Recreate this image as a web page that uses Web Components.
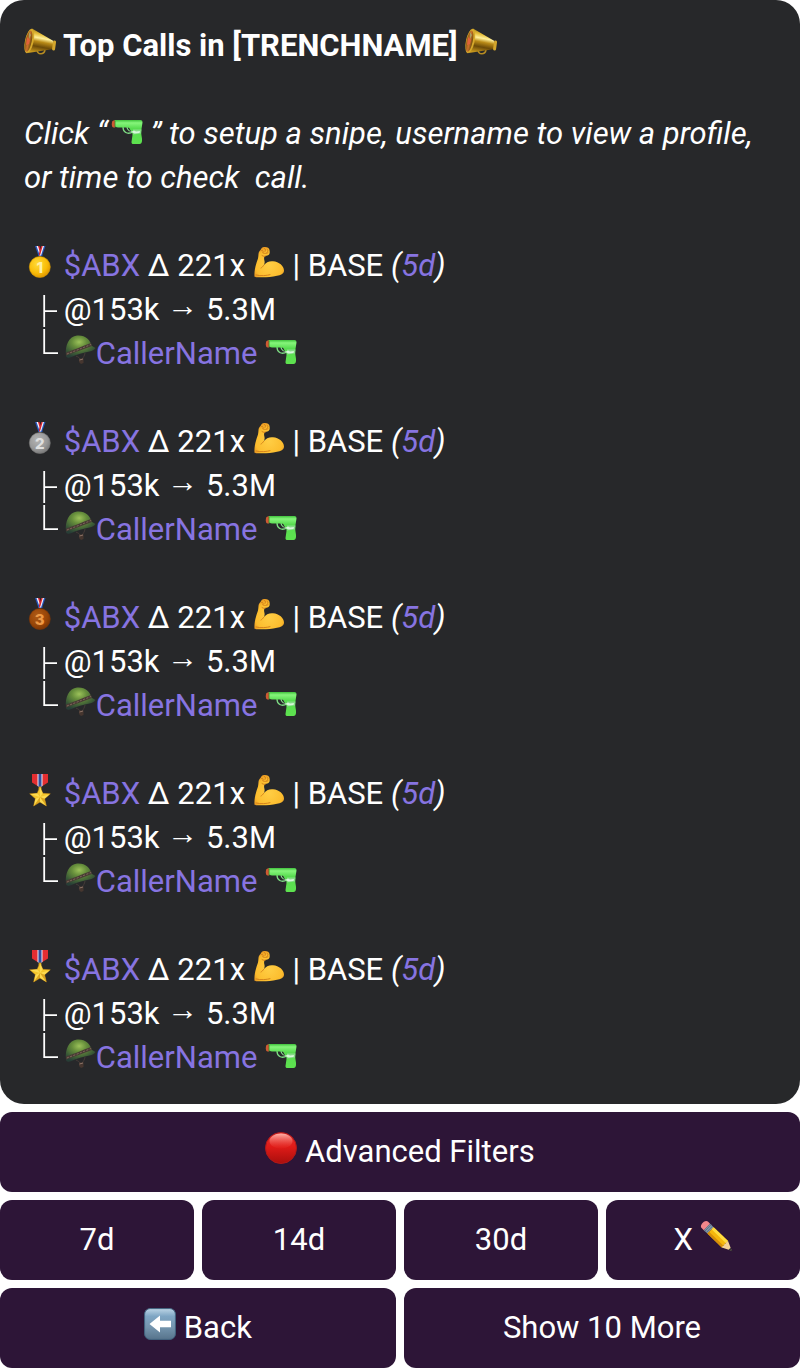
<!DOCTYPE html>
<html lang="en">
<head>
<meta charset="utf-8">
<meta name="viewport" content="width=device-width, initial-scale=1">
<title>Top Calls</title>
<style>
body { margin: 0; background: #fff; font: 31px/44px Roboto, sans-serif; color: #fff; }
</style>
</head>
<body>
<top-calls-page></top-calls-page>
<script>
const medal = (rim, light, mid, dark, ink, digit) => `
  <defs><radialGradient id="m" cx=".4" cy=".35" r=".75"><stop offset="0" stop-color="${light}"/><stop offset=".6" stop-color="${mid}"/><stop offset="1" stop-color="${dark}"/></radialGradient></defs>
  <path d="M11 0h3.500l4 10h-4z" fill="#2754b8"/><path d="M12.500 0h2l3.500 10h-2z" fill="#f4f4fa"/><path d="M14 0h1.500l2.500 8-1 2z" fill="#d8232c"/>
  <path d="M21.500 0H18l-3.500 10H18z" fill="#2754b8"/><path d="M20 0h-2l-3 9.500h2z" fill="#f4f4fa"/><path d="M18.700 0h-1.400l-2.500 8 1 2z" fill="#d8232c"/>
  <circle cx="15.800" cy="21" r="10.500" fill="url(#m)" stroke="${rim}" stroke-width=".6"/>
  <text x="15.800" y="26.500" text-anchor="middle" font-family="Inter, sans-serif" font-weight="800" font-size="15" fill="${ink}">${digit}</text>`;
const ICONS = {
  horn: `
  <defs><linearGradient id="b" x1=".6" y1="0" x2=".4" y2="1"><stop offset="0" stop-color="#8d6a12"/><stop offset=".25" stop-color="#e5bd38"/><stop offset=".4" stop-color="#fff09a"/><stop offset=".55" stop-color="#b98a16"/><stop offset=".75" stop-color="#6b4a08"/><stop offset="1" stop-color="#c8981d"/></linearGradient>
  <linearGradient id="c"><stop offset="0" stop-color="#8c5a12"/><stop offset=".5" stop-color="#c9702a"/><stop offset="1" stop-color="#6d4b0c"/></linearGradient></defs>
  <g transform="translate(0 2)"><path d="M13 22c.5 5 7 5 8 0" fill="none" stroke="#b68c22" stroke-width="1.500"/>
  <path d="M8 .5 29.500 13v8L4 25z" fill="url(#b)"/>
  <ellipse cx="5.300" cy="13" rx="4.300" ry="12.500" transform="rotate(12 5.300 13)" fill="#d6a92b"/>
  <ellipse cx="4.600" cy="13.200" rx="3.100" ry="10.800" transform="rotate(12 4.600 13.200)" fill="url(#c)"/>
  <path d="M3 9l3 3-1 4-3 1z" fill="#e0623a"/><path d="M5 4l2 3-2 4z" fill="#a8a066"/>
  <rect x="28.500" y="12.500" width="3" height="10" rx="1.500" transform="rotate(8 30 18)" fill="#d3a62d"/></g>`,
  gun: `
  <defs><linearGradient id="g" x2="0" y2="1"><stop offset="0" stop-color="#3fc23c"/><stop offset=".12" stop-color="#86f57b"/><stop offset=".35" stop-color="#58dc50"/><stop offset="1" stop-color="#5ee24f"/></linearGradient></defs>
  <g transform="translate(0 1)"><path d="M12 12c0 5 4 8 10 5" fill="none" stroke="#7ddb83" stroke-width="1.300"/><path d="M16 12c0 2 1 3 2.500 4" fill="none" stroke="#8ce492" stroke-width="1.200"/>
  <path d="M3.500 5h26c1.500 0 2 1 2 2.500l-1 6.500c-1 5 1 9 .5 12-.2 2-1 3-2.500 3h-6c-1.500 0-2-.5-2-2l1-7c0-2-.5-3-2-4.500-.5-1.500-1-3-3-3H9c-3 0-4-.5-5.500-1z" fill="url(#g)"/>
  <path d="M4 5.500H2.500C1 6 .8 7 .8 9.500c0 2 .7 3 1.700 3H4z" fill="#cf5933"/><path d="M4 6v6.500" stroke="#437d29" stroke-width=".8"/>
  <path d="M22 14.500v5l8-1 .5-4z" fill="#84db85"/><path d="m18 16 3 .5 2-1 2 1 4-.5-.5 2-5 .5z" fill="#d7f7da"/></g>`,
  gold: medal('#d99a00', '#ffdc3b', '#f9bc08', '#d58a00', '#fff0a6', 1),
  silver: medal('#777', '#b5b5b5', '#989898', '#6d6d6d', '#e0e0e0', 2),
  bronze: medal('#7d3607', '#b15c18', '#974507', '#713004', '#ee9a46', 3),
  star: `
  <path d="M8 0h16v8.500l-8 5-8-5z" fill="#e32e31"/><path d="M13.500 0h5v12l-2.500 1.500-2.500-1.500z" fill="#e6e9f5"/><path d="M14.500 0h3v13h-3z" fill="#2f4f9f"/>
  <circle cx="16" cy="14" r="1.500" fill="#d9aa2e"/>
  <path d="m16 12.500 2.800 6.800 7.500.5-5.700 4.900 1.800 7.300L16 28.100l-6.400 3.900 1.800-7.300-5.700-4.900 7.500-.5z" fill="#f5c72d" stroke="#c98a12" stroke-width=".5"/>
  <path d="m16 13 2.800 6.300L16 23zM16 23l9.800-2.800-5.200 4.500zM16 23l6 8.700-6-3.600zM16 23l-6 8.700 1.400-7zM16 23l-9.700-2.800 6.900-.9z" fill="#ffe15c" opacity=".75"/><path d="m16 23 4.600 1.700 1.400 7zM16 23v5.100l-6 3.600z" fill="#cc9117" opacity=".6"/>`,
  muscle: `
  <defs><radialGradient id="u" cx=".5" cy=".6" r=".65"><stop offset="0" stop-color="#ffce45"/><stop offset=".7" stop-color="#fcbd2e"/><stop offset="1" stop-color="#e59220"/></radialGradient></defs>
  <path d="M1.500 30.500C1 24 3 18 5 12.500c.4-1.500.3-3 .5-4.500 0-2 1-3 2-4C8.500 1.500 10 .5 12 1c2.500.3 4.300 1 4.500 3 .3 2.200.5 4-1 5-1.500.9-3 .8-4 1.500-.7 1.500-.4 3 0 4.500.4 2-.2 3.500-1 4.500 2.500-3.500 6-4.700 9.500-4.300C26 15.500 31 20 31 24.500c0 3.500-3.500 4.500-7 5.300-6.500 1.500-13 1.700-19.500 1.400-2 0-2.800 0-3-.7z" fill="url(#u)"/>
  <path d="M10.500 19.500c-.8 1.200-1.500 2-2.500 2.500M9 9.500c1.500 1 2.500 1 3.500.6M8.500 4.500c1.500-.8 2 .8 1.500 2M11.500 2.500c1.500.5 1 2 .5 3M14.500 3.500c1 .8.500 2-.5 3M10 7c2 .6 3.500.6 5-.2M3 29c5 1.300 11 .5 14-.3" fill="none" stroke="#cf7c19" stroke-width=".9" stroke-linecap="round"/>`,
  helmet: `
  <defs><radialGradient id="h" cx=".45" cy=".3" r=".7"><stop offset="0" stop-color="#9cc25a"/><stop offset=".35" stop-color="#668e3b"/><stop offset=".75" stop-color="#3c5b36"/><stop offset="1" stop-color="#273e36"/></radialGradient></defs>
  <path d="M12 22c1.500 1 3 1 4 3M21 19c-.4 3-1.800 4-2.500 6" fill="none" stroke="#453b38"/><path d="M15 24.500h4.500v4.500l-2.500 1-2-2z" fill="#46362f"/><path d="m15.500 26 3.500-1" stroke="#8d7467"/>
  <path d="M2 22C.8 11 5 2.500 13 1.500c8-.8 13 4 15 10.500l3.500 2c-1 2-3.500 3-6 3.500-6 1.200-13 3-18 5.500-3 1-5 1-5.500-1z" fill="url(#h)"/>
  <path d="M2 18.500c7-2.500 16-6 25-9.500l1 3C19 15.500 10 18.500 2 21.500z" fill="#493b35"/><path d="M3 20c7-2.700 15-5.800 24-9.500" fill="none" stroke="#8b7562" stroke-width=".8" stroke-dasharray="2 1.500"/>`,
  red: `
  <defs><linearGradient id="r" x2="0" y2="1"><stop offset="0" stop-color="#e53434"/><stop offset=".45" stop-color="#e01b18"/><stop offset="1" stop-color="#a90f0d"/></linearGradient><linearGradient id="s" x2="0" y2="1"><stop offset="0" stop-color="#ffb1a8"/><stop offset="1" stop-color="#ec4036" stop-opacity=".1"/></linearGradient></defs>
  <circle cx="16" cy="16" r="15.500" fill="url(#r)" stroke="#b01919"/><ellipse cx="16" cy="9" rx="11.500" ry="7.500" fill="url(#s)"/>`,
  pencil: `
  <g transform="translate(4.500 5.500) rotate(44)">
  <path d="M-1-4.500h3v9h-3c-4 0-4-9 0-9z" fill="#f2878b"/><path d="M2-4.500h5v9H2z" fill="#8196a8"/><path d="M3.500-4.500v9M5.500-4.500v9" stroke="#536879" stroke-width=".7"/>
  <path d="M7-4.500h20v9H7z" fill="#f5b70d"/><path d="M7-4.500h20v3H7z" fill="#ffdc3e"/><path d="M7 2h20v2.500H7z" fill="#d78f08"/>
  <path d="m27-4.500 9.500 4.500L27 4.500c-1-2 .5-2 0-3.500-1-.7 0-1.500 0-2.500-.7-1 0-2 0-3z" fill="#f4d195"/><path d="m33.500-1.500 4 1.500-4 1.500z" fill="#343434"/></g>`,
  back: `
  <defs><linearGradient id="k" x2="0" y2="1"><stop offset="0" stop-color="#bdd5e6"/><stop offset=".25" stop-color="#7fa6c4"/><stop offset=".6" stop-color="#7595ae"/><stop offset="1" stop-color="#57748c"/></linearGradient></defs>
  <rect x=".6" y=".6" width="30.800" height="30.800" rx="5.500" fill="url(#k)" stroke="#426581" stroke-width="1"/>
  <path d="M5.500 16 16 7.500V12.700h11v6.600H16v5.200z" fill="#fff"/>`
};

class EmojiIcon extends HTMLElement {
  connectedCallback() {
    const root = this.attachShadow({ mode: 'open' });
    root.innerHTML = `<style>
      :host { display: inline-block; width: 32px; height: 32px; vertical-align: -2px; line-height: 0; }
      svg { display: block; width: 100%; height: 100%; overflow: visible; }
    </style><svg viewBox="0 0 32 32" aria-hidden="true">${ICONS[this.getAttribute('name')]}</svg>`;
  }
}
customElements.define('emoji-icon', EmojiIcon);

/* Connector of the call tree: a tee for a middle row, a corner for the last one. */
class TreeBranch extends HTMLElement {
  connectedCallback() {
    const last = this.hasAttribute('last');
    const root = this.attachShadow({ mode: 'open' });
    root.innerHTML = `<style>
      :host { display: inline-block; width: 24px; height: 44px; vertical-align: top; }
      svg { display: block; overflow: visible; }
    </style><svg width="24" height="44" viewBox="0 0 24 44" role="img" aria-label="${last ? '└' : '├'}">
      <path d="${last ? 'M12.200-3V21.200H26' : 'M12.200 7v32M12.200 23.200H25'}" fill="none" stroke="#fff" stroke-width="1.800"/></svg>`;
  }
}
customElements.define('tree-branch', TreeBranch);

class CallEntry extends HTMLElement {
  connectedCallback() {
    const root = this.attachShadow({ mode: 'open' });
    root.innerHTML = `<style>
      :host { display: block; }
      p { margin: 0; }
      a { color: #8774e1; text-decoration: none; }
      .tree { padding-left: 8px; }
      .arrow { font-family: "Liberation Sans", sans-serif; line-height: 0; vertical-align: 4px; }
    </style>
    <p><emoji-icon name="${this.getAttribute('rank')}"></emoji-icon> <a href="#token"><slot name="token"></slot></a> Δ <slot name="gain"></slot> <emoji-icon name="muscle"></emoji-icon> | <slot name="chain"></slot> <i>(<a href="#call"><slot name="age"></slot></a>)</i></p>
    <p class="tree"><tree-branch></tree-branch> <slot name="from"></slot> <span class="arrow">→</span> <slot name="to"></slot></p>
    <p class="tree"><tree-branch last></tree-branch> <a href="#caller"><emoji-icon name="helmet"></emoji-icon><slot name="caller"></slot></a> <a href="#snipe" aria-label="Snipe"><emoji-icon name="gun"></emoji-icon></a></p>`;
  }
}
customElements.define('call-entry', CallEntry);

class MessagePanel extends HTMLElement {
  connectedCallback() {
    const root = this.attachShadow({ mode: 'open' });
    root.innerHTML = `<style>
      :host { display: flex; flex-direction: column; gap: 44px; padding: 24px; border-radius: 24px; background: #27282a; }
      h1, p { margin: 0; font-size: inherit; line-height: inherit; }
      h1 { font-weight: 700; }
      p { font-style: italic; }
    </style>
    <h1><emoji-icon name="horn"></emoji-icon> Top Calls in [TRENCHNAME] <emoji-icon name="horn"></emoji-icon></h1>
    <p>Click “&hairsp;<emoji-icon name="gun"></emoji-icon> ” to setup a snipe, username to view a profile, or time to check&nbsp; call.</p>
    <slot></slot>`;
  }
}
customElements.define('message-panel', MessagePanel);

class ActionButton extends HTMLElement {
  connectedCallback() {
    const root = this.attachShadow({ mode: 'open' });
    root.innerHTML = `<style>
      :host { display: block; flex: 1 1 0; min-width: 0; }
      button { display: block; width: 100%; margin: 0; padding: 18px 8px; border: 0; border-radius: 12px; background: #2d1537; color: inherit; font: inherit; cursor: pointer; }
    </style><button type="button"><slot></slot></button>`;
  }
}
customElements.define('action-button', ActionButton);

class TopCallsPage extends HTMLElement {
  connectedCallback() {
    const root = this.attachShadow({ mode: 'open' });
    const entries = ['gold', 'silver', 'bronze', 'star', 'star'].map(rank => `
      <call-entry rank="${rank}"><span slot="token">$ABX</span><span slot="gain">221x</span><span slot="chain">BASE</span><span slot="age">5d</span><span slot="from">@153k</span><span slot="to">5.3M</span><span slot="caller">CallerName</span></call-entry>`).join('');
    root.innerHTML = `<style>
      :host { display: flex; flex-direction: column; gap: 8px; }
      .row { display: flex; gap: 8px; }
    </style>
    <message-panel>${entries}</message-panel>
    <div class="row"><action-button><emoji-icon name="red"></emoji-icon> Advanced Filters</action-button></div>
    <div class="row"><action-button>7d</action-button><action-button>14d</action-button><action-button>30d</action-button><action-button>X <emoji-icon name="pencil"></emoji-icon></action-button></div>
    <div class="row"><action-button><emoji-icon name="back"></emoji-icon> Back</action-button><action-button>Show 10 More</action-button></div>`;
  }
}
customElements.define('top-calls-page', TopCallsPage);
</script>
</body>
</html>
